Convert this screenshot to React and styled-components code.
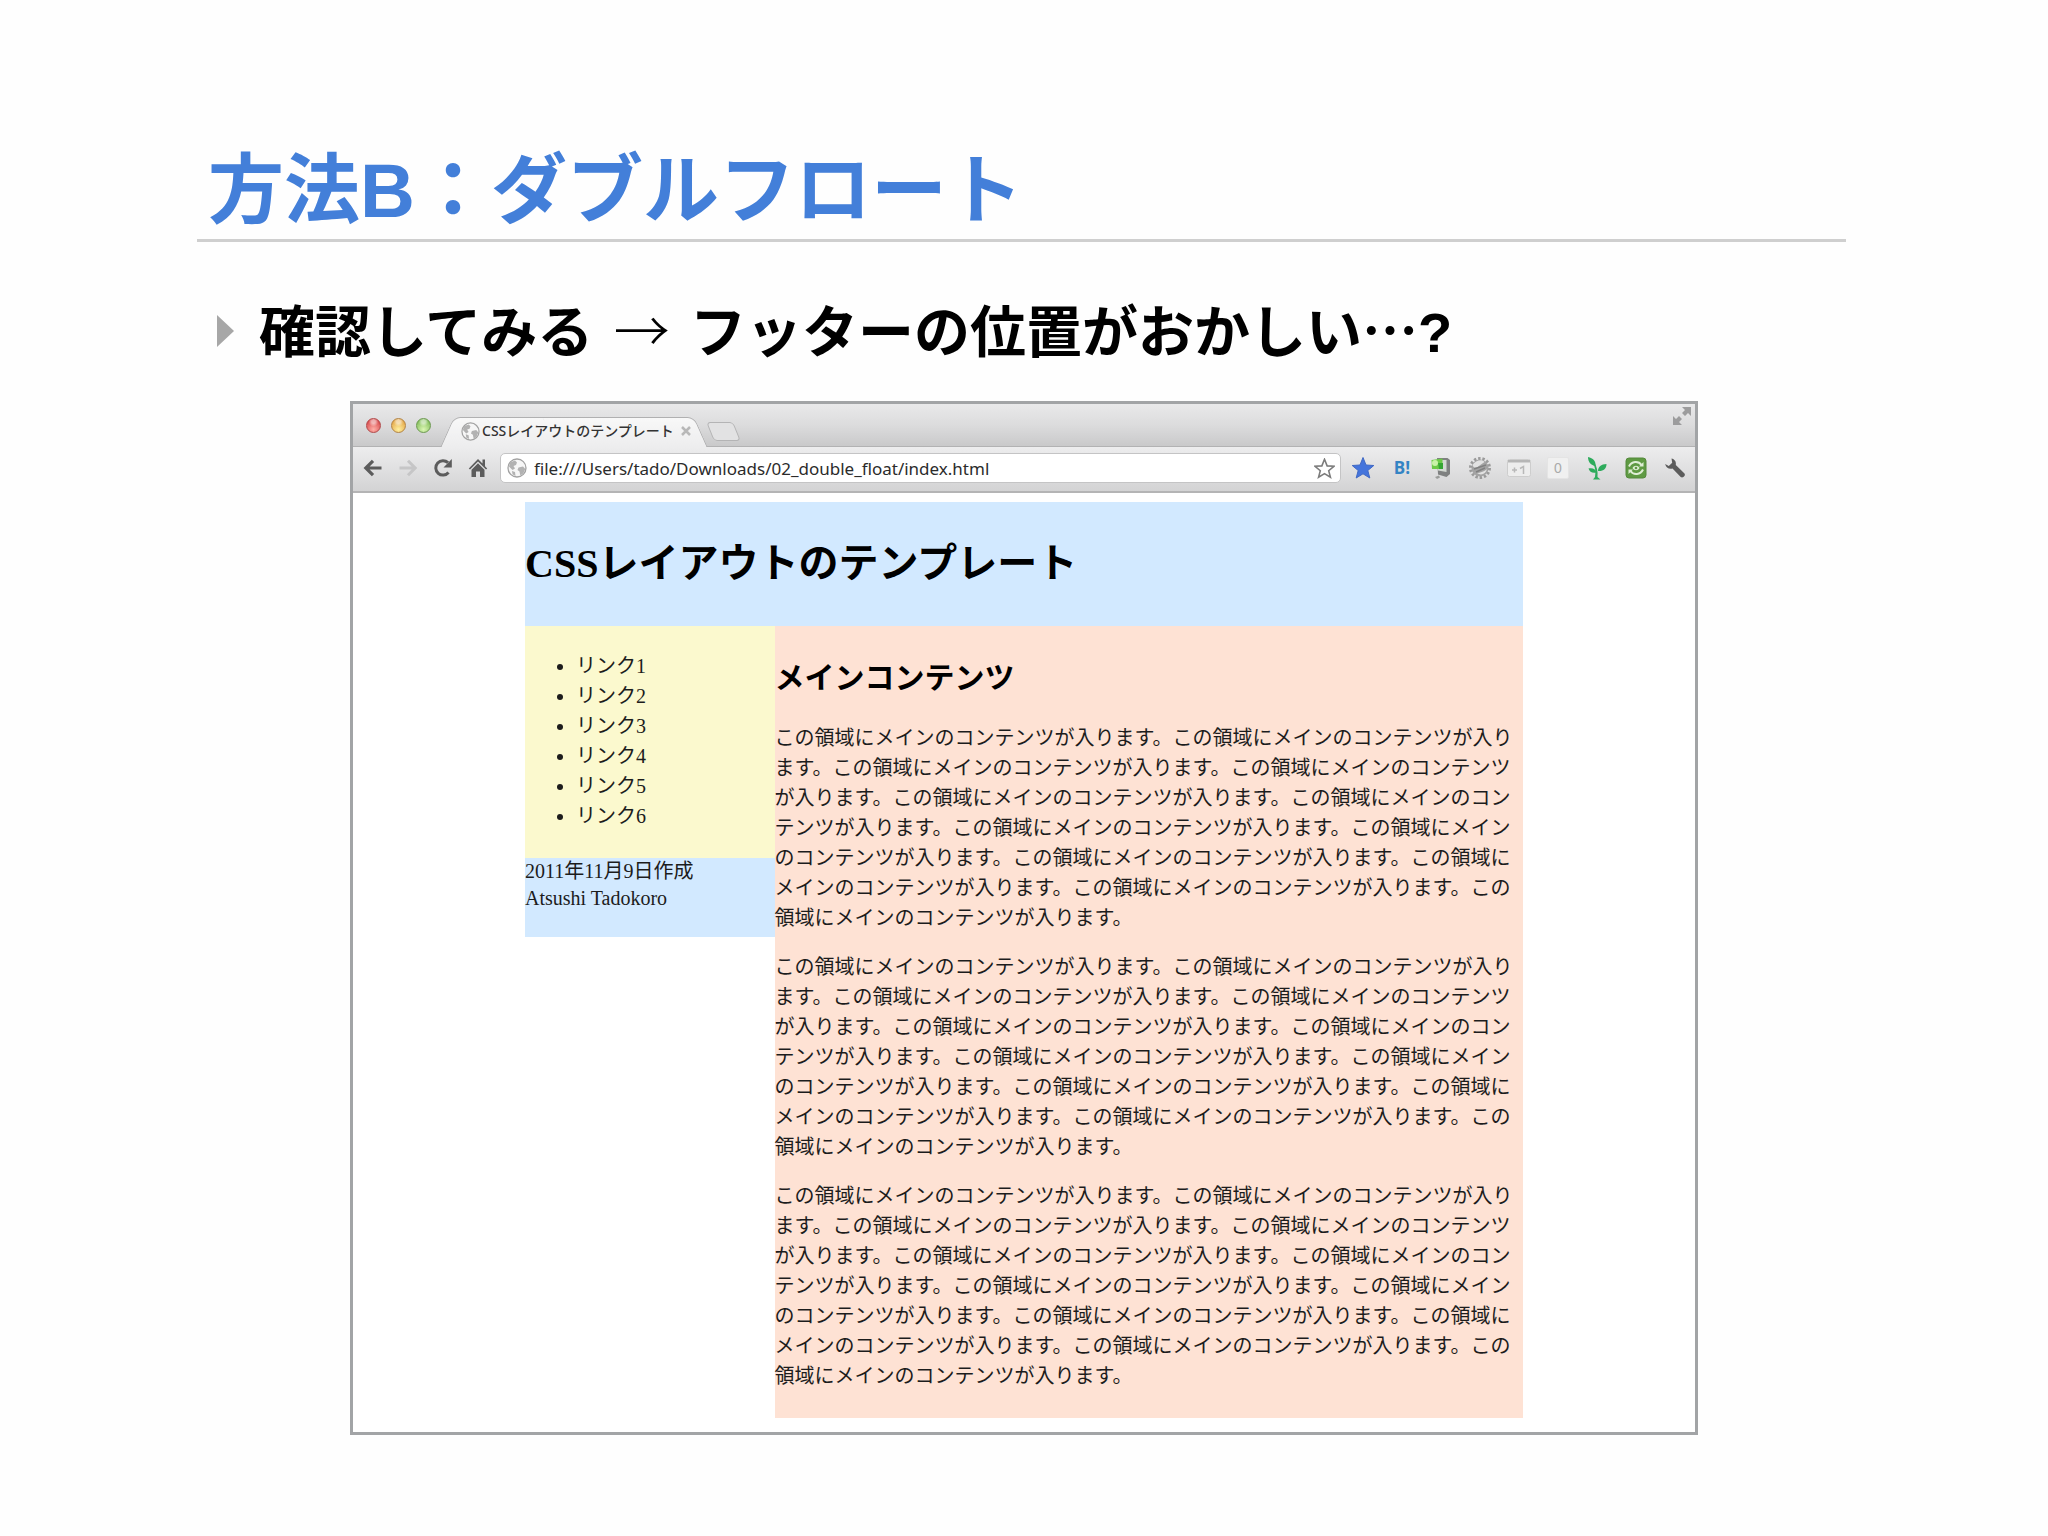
import React from "react";
import styled, { createGlobalStyle } from "styled-components";

const GlobalStyle = createGlobalStyle`
  *, *::before, *::after { box-sizing: border-box; }
  html, body { margin: 0; background: #fefefe; }
  h1, h2, p, ul { margin: 0; padding: 0; }
`;

const SANS = `"Noto Sans CJK JP", sans-serif`;
const LATIN = `"Liberation Sans", sans-serif`;
const PAGE = `"Liberation Serif", "Noto Sans CJK JP", serif`;
const CHROME = `"Noto Sans", "Noto Sans CJK JP", sans-serif`;

const Slide = styled.main`
  padding: 134px 202px 102px 197px;
  font-family: ${SANS};
`;

const SlideTitle = styled.h1`
  padding: 0 10px 5px 11px;
  border-bottom: 3px solid #cfcfcf;
  color: #437fd9;
  font-size: 76px;
  font-weight: 700;
  line-height: 100px;
`;

const Latin = styled.span`
  font-family: ${LATIN};
  line-height: 0;
`;

const Point = styled.p`
  display: flex;
  align-items: center;
  gap: 25px;
  margin: 46px 0 33px;
  padding-left: 20px;
  color: #000;
  font-size: 56px;
  font-weight: 700;
  line-height: 80px;
`;

const Marker = styled.span`
  width: 0;
  height: 0;
  margin-top: 6px;
  border: solid transparent;
  border-width: 16px 0 16px 17px;
  border-left-color: #a7a7a7;
`;

const Arrow = styled.span`
  margin: 0 8px;
  font-weight: 300;
`;

const Browser = styled.section`
  margin: 0 148px 0 153px;
  border: 3px solid #a2a4a6;
  background: #fff;
`;

const TabStrip = styled.div`
  display: flex;
  align-items: flex-end;
  height: 43px;
  padding: 0 3px 0 13px;
  background: linear-gradient(#e9e9ea, #dcdcdd 50%, #c9c9ca);
  border-bottom: 1px solid #b2b2b3;
`;

const Lights = styled.div`
  display: flex;
  align-self: center;
  gap: 10px;
  margin-right: 16px;
`;

const Light = styled.button`
  width: 15px;
  height: 15px;
  padding: 0;
  border: 1px solid ${(p) => p.$edge};
  border-radius: 50%;
  background: radial-gradient(circle at 50% 20%, #fff8 0 15%, transparent 40%),
    radial-gradient(circle at 50% 80%, ${(p) => p.$glow}, ${(p) => p.$tone} 75%);
`;

const Tab = styled.div`
  position: relative;
  z-index: 1;
  display: flex;
  align-items: center;
  width: 254px;
  height: 30px;
  margin-bottom: -1px;
  padding: 0 9px 2px 14px;

  &::before,
  &::after {
    content: "";
    position: absolute;
    z-index: -1;
    top: 0;
    bottom: 0;
    width: 60%;
    border-top: 1px solid #b0b0b1;
    background: linear-gradient(#f8f8f8, #ededee);
  }
  &::before {
    left: 0;
    border-left: 1px solid #b0b0b1;
    border-top-left-radius: 7px;
    transform: skewX(-24deg);
  }
  &::after {
    right: 0;
    border-right: 1px solid #b0b0b1;
    border-top-right-radius: 7px;
    transform: skewX(24deg);
  }
`;

const TabTitle = styled.span`
  flex: 1;
  margin-left: 2px;
  color: #333;
  font-family: ${CHROME};
  font-size: 14px;
  font-weight: 500;
  line-height: 20px;
  white-space: nowrap;
`;

const IconButton = styled.button`
  display: grid;
  place-items: center;
  flex: none;
  width: 24px;
  height: 24px;
  padding: 0;
  border: 0;
  background: none;
`;

const TabClose = styled(IconButton)`
  width: 12px;
`;

const NewTab = styled.button`
  align-self: center;
  width: 27px;
  height: 19px;
  margin: 13px auto 0 9px;
  padding: 0;
  border: 1px solid #b4b4b5;
  border-radius: 4px;
  background: #e2e2e3;
  transform: skewX(22deg);
`;

const FullScreen = styled(IconButton)`
  align-self: flex-start;
  width: 20px;
`;

const Toolbar = styled.div`
  display: flex;
  align-items: center;
  height: 46px;
  padding: 0 8px 2px 8px;
  background: linear-gradient(#ededee, #d3d3d4);
  border-bottom: 2px solid #b4b4b5;
`;

const Nav = styled.nav`
  display: flex;
  gap: 11px;
  margin-right: 10px;
`;

const AddressBar = styled.label`
  display: flex;
  align-items: center;
  flex: 1;
  height: 30px;
  padding: 0 4px;
  border: 1px solid #c4c4c5;
  border-radius: 5px;
  background: #fff;
`;

const AddressInput = styled.input`
  flex: 1;
  min-width: 0;
  height: 24px;
  margin-left: 5px;
  padding: 0;
  border: 0;
  outline: 0;
  background: none;
  color: #2b2b2b;
  font-family: ${CHROME};
  font-size: 17px;
`;

const Extensions = styled.div`
  display: flex;
  gap: 15px;
  margin-left: 10px;
`;

const BadgeB = styled(IconButton)`
  color: #3484c4;
  font: 700 17px/24px "Open Sans", sans-serif;
`;

const Viewport = styled.div`
  padding: 9px 0 14px;
`;

const Document = styled.article`
  max-width: 998px;
  margin: 0 auto;
  color: #1c1c1c;
  font-family: ${PAGE};
  font-size: 20px;
  line-height: 30px;
`;

const DocHeader = styled.header`
  padding: 32px 0;
  background: #d2e9ff;
`;

const DocTitle = styled.h1`
  color: #000;
  font-size: 40px;
  line-height: 60px;
`;

const Columns = styled.div`
  display: flex;
  align-items: flex-start;
`;

const SideColumn = styled.div`
  flex: 0 0 25%;
`;

const LinkList = styled.ul`
  && {
    padding: 25px 0 27px 51px;
  }
  background: #fbf9ce;
`;

const DocFooter = styled.footer`
  padding-bottom: 25px;
  background: #d2e9ff;
  line-height: 27px;
`;

const MainColumn = styled.section`
  flex: 1;
  padding: 34px 0 27px;
  background: #fee2d4;
`;

const MainTitle = styled.h2`
  && {
    margin-bottom: 27px;
  }
  color: #000;
  font-size: 30px;
  line-height: 36px;
`;

const Paragraph = styled.p`
  & + & {
    margin-top: 19px;
  }
`;

const Globe = ({ size = 20 }) => (
  <svg width={size} height={size} viewBox="0 0 20 20" aria-hidden="true">
    <circle cx="10" cy="10" r="9" fill="#f6f6f6" stroke="#a2a2a2" strokeWidth="1.3" />
    <path d="M3 4.5 8 2.5l2 2-1 2.5-2.5 1L8 10.500 5.500 12 2 8.500zM11.500 9.500l4.500-1 2.300 2.500-2 4.500-3 2-.8-4-2-1.500zM5 13l3 1 .5 4-3-1.800z" fill="#b2b2b2" />
  </svg>
);

const STAR = "M12 1.500 15 9l7.800.5-6 5 2 7.500-6.800-4.200L5.200 22l2-7.500-6-5L9 9z";

const Back = () => (
  <svg width="20" height="18" viewBox="0 0 20 18" fill="none" stroke="#5c5c5c" strokeWidth="3.200">
    <path d="M18.500 9H3M10 1.800 2.800 9l7.200 7.200" />
  </svg>
);
const Forward = () => (
  <svg width="20" height="18" viewBox="0 0 20 18" fill="none" stroke="#c6c6c7" strokeWidth="3">
    <path d="M1.500 9H17M10 1.800 17.200 9 10 16.200" />
  </svg>
);
const Reload = () => (
  <svg width="20" height="20" viewBox="0 0 20 20">
    <path d="M15.500 14.500a7.200 7.200 0 1 1-.5-9.800" fill="none" stroke="#5c5c5c" strokeWidth="3" />
    <path d="M18.800 1v8.500h-8.300z" fill="#5c5c5c" />
  </svg>
);
const Home = () => (
  <svg width="20" height="20" viewBox="0 0 20 20" fill="#5c5c5c">
    <path d="M10 1 .8 10.500l1.200 1 8-8 8 8 1.200-1-2.200-2.300V1.500h-2.500v4z" />
    <path d="M10 5.200 3.500 11.700V19H8v-5.500h4V19h4.500v-7.300z" />
  </svg>
);

const Monitor = () => (
  <svg width="24" height="24" viewBox="0 0 24 24">
    <path d="M8 2h10.500l2.500 2v14l-3.500 3L9 18.500z" fill="#7f8181" />
    <path d="M9 4h8.500v12L9 14.500z" fill="#d3d8d2" />
    <path d="M2.500 4 13.500 2.500V13L3 13z" fill="#6cc948" />
    <circle cx="6" cy="7" r="3" fill="#c8f2a8" />
    <path d="M9 7h5v6h-4z" fill="#35a632" />
    <path d="M6 21l4-1.500 1 2-3 1.500z" fill="#9a9c9a" />
  </svg>
);
const Gear = () => (
  <svg width="24" height="24" viewBox="0 0 24 24">
    <circle cx="12" cy="12" r="9.500" fill="none" stroke="#9a9a9a" strokeWidth="3" strokeDasharray="2.400 1.860" />
    <circle cx="12" cy="12" r="8.500" fill="#a3a3a3" />
    <path d="M4.500 9c3-5 10-6 12-3l-7 5c-2 1-4 1-5-2zM9 17c3 0 8-2 10-4-1 5-6 7-10 4z" fill="#e2e2e2" />
    <path d="M6 13l12-4M8 16l9-4" stroke="#808080" strokeWidth="1.500" />
  </svg>
);
const PlusOne = () => (
  <svg width="24" height="20" viewBox="0 0 24 20">
    <rect x=".5" y="1.500" width="23" height="17" rx="2" fill="#ededed" stroke="#cdcdcd" />
    <path d="M1 2h22v2.500H1z" fill="#b6b6b6" />
    <path d="M5 12h5M7.500 9.500v5M13 10.500l3.500-2V16" fill="none" stroke="#b8b8b8" strokeWidth="1.500" />
  </svg>
);
const Counter = styled.span`
  width: 22px;
  height: 22px;
  border: 1px solid #e4e4e4;
  border-radius: 2px;
  background: #f0f0f0;
  color: #aaa;
  font: 14px/20px ${LATIN};
`;
const Sprout = () => (
  <svg width="20" height="24" viewBox="0 0 20 24" fill="#2eab5c">
    <path d="M1 1c5 1 8 4 7.500 9C4 9.500 1 6 1 1z" />
    <path d="M19.500 8c0 5-3.500 7.500-8.500 7C11 11 14 8 19.500 8z" />
    <path d="M1.500 12.500c4-1 7 .5 8 4C5.500 17.500 2.500 16 1.500 12.500z" />
    <path d="M7 6c3 5 4 9 3.500 15l3 2.500H6L8 21C9 15 8 11 6 7z" />
  </svg>
);
const GreenEye = () => (
  <svg width="22" height="22" viewBox="0 0 22 22">
    <rect x="1" y="1" width="20" height="20" rx="3" fill="#5f9a43" stroke="#558a3c" />
    <path d="M4 9.500c2.500-5.500 9.500-6 12.500-1.500M18 12.500c-2.500 5.500-9.500 6-12.500 1.500" fill="none" stroke="#dfeed6" strokeWidth="2" />
    <path d="M18.500 5v4.500H14zM3.500 17v-4.500H8z" fill="#dfeed6" />
    <path d="M7.500 11c1.500-3 5.500-3 7 0-1.500 3-5.500 3-7 0z" fill="#dfeed6" />
    <circle cx="11" cy="11" r="1.300" fill="#5f9a43" />
  </svg>
);
const Wrench = () => (
  <svg width="22" height="22" viewBox="0 0 22 22" fill="#5c5c5c">
    <path d="M7.500 1.500c3 .5 5 3.200 4.300 6.500l8.700 8.500c1.500 2-1.500 5-3.800 3.500L8.500 11.500C5 12.500 1.800 10.500 1.200 7l3.600 2L8.200 5.800z" />
  </svg>
);

const SENTENCE = "この領域にメインのコンテンツが入ります。";
const LINKS = [1, 2, 3, 4, 5, 6];
const LIGHTS = [
  { label: "閉じる", edge: "#b2494a", tone: "#d94f50", glow: "#ffb0a8" },
  { label: "しまう", edge: "#b38444", tone: "#e5a94a", glow: "#fff0a0" },
  { label: "拡大", edge: "#6c9a50", tone: "#86bf5e", glow: "#dcf7b4" },
];

export default function App() {
  return (
    <>
      <GlobalStyle />
      <Slide lang="ja">
        <SlideTitle>
          方法<Latin>B</Latin>：ダブルフロート
        </SlideTitle>
        <Point>
          <Marker />
          <span>
            確認してみる<Arrow> → </Arrow>フッターの位置がおかしい…<Latin>?</Latin>
          </span>
        </Point>
        <Browser>
          <TabStrip>
            <Lights>
              {LIGHTS.map((l) => (
                <Light key={l.label} aria-label={l.label} $edge={l.edge} $tone={l.tone} $glow={l.glow} />
              ))}
            </Lights>
            <Tab>
              <Globe size={19} />
              <TabTitle>CSSレイアウトのテンプレート</TabTitle>
              <TabClose aria-label="タブを閉じる">
                <svg width="10" height="10" viewBox="0 0 10 10" stroke="#b8b8b8" strokeWidth="2.500">
                  <path d="M1 1l8 8M9 1 1 9" />
                </svg>
              </TabClose>
            </Tab>
            <NewTab aria-label="新しいタブ" />
            <FullScreen aria-label="フルスクリーン">
              <svg width="18" height="18" viewBox="0 0 18 18" fill="#9c9c9d">
                <path d="M9 0h9v9l-3-3-3 3-3-3 3-3zM0 9l3 3 3-3 3 3-3 3 3 3H0z" />
              </svg>
            </FullScreen>
          </TabStrip>
          <Toolbar>
            <Nav>
              <IconButton aria-label="戻る"><Back /></IconButton>
              <IconButton aria-label="進む"><Forward /></IconButton>
              <IconButton aria-label="再読み込み"><Reload /></IconButton>
              <IconButton aria-label="ホーム"><Home /></IconButton>
            </Nav>
            <AddressBar>
              <IconButton as="span"><Globe /></IconButton>
              <AddressInput
                aria-label="アドレス"
                defaultValue="file:///Users/tado/Downloads/02_double_float/index.html"
              />
              <IconButton aria-label="ブックマーク">
                <svg width="21" height="21" viewBox="0 0 24 24">
                  <path d={STAR} fill="#fff" stroke="#7c7c7c" strokeWidth="1.800" />
                </svg>
              </IconButton>
            </AddressBar>
            <Extensions>
              <IconButton aria-label="スター">
                <svg width="24" height="24" viewBox="0 0 24 24">
                  <path d={STAR} fill="#4474dc" stroke="#3f68c4" />
                </svg>
              </IconButton>
              <BadgeB>B!</BadgeB>
              <IconButton aria-label="モニター"><Monitor /></IconButton>
              <IconButton aria-label="設定"><Gear /></IconButton>
              <IconButton aria-label="プラス"><PlusOne /></IconButton>
              <IconButton><Counter>0</Counter></IconButton>
              <IconButton aria-label="芽"><Sprout /></IconButton>
              <IconButton aria-label="更新"><GreenEye /></IconButton>
              <IconButton aria-label="ツール"><Wrench /></IconButton>
            </Extensions>
          </Toolbar>
          <Viewport>
            <Document>
              <DocHeader>
                <DocTitle>CSSレイアウトのテンプレート</DocTitle>
              </DocHeader>
              <Columns>
                <SideColumn>
                  <LinkList>
                    {LINKS.map((n) => (
                      <li key={n}>リンク{n}</li>
                    ))}
                  </LinkList>
                  <DocFooter>
                    2011年11月9日作成
                    <br />
                    Atsushi Tadokoro
                  </DocFooter>
                </SideColumn>
                <MainColumn>
                  <MainTitle>メインコンテンツ</MainTitle>
                  {[0, 1, 2].map((i) => (
                    <Paragraph key={i}>{SENTENCE.repeat(12)}</Paragraph>
                  ))}
                </MainColumn>
              </Columns>
            </Document>
          </Viewport>
        </Browser>
      </Slide>
    </>
  );
}
